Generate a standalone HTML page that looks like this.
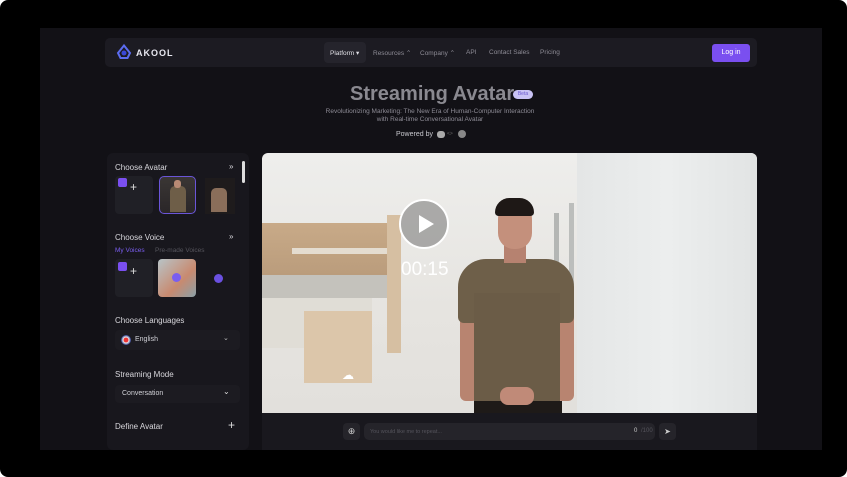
<!DOCTYPE html>
<html><head><style>
*{margin:0;padding:0;box-sizing:border-box}
body{width:847px;height:477px;background:#fff;font-family:"Liberation Sans",sans-serif;overflow:hidden;position:relative}
.frame{position:absolute;left:0;top:0;width:847px;height:477px;background:#000;border-radius:8px}
.page{position:absolute;left:40px;top:28px;width:782px;height:422px;background:#121116}
.nav{position:absolute;left:105px;top:38px;width:652px;height:29px;background:#1c1b22;border-radius:5px}
.abs{position:absolute}
.nl{font-size:6.5px;color:#8d8b95;top:49px}
.side{position:absolute;left:107px;top:153px;width:142px;height:297px;background:#18171d;border-radius:6px}
.h{font-size:8px;color:#d8d7dc;position:absolute}
.card{position:absolute;background:#202026;border-radius:4px}
.video{position:absolute;left:262px;top:153px;width:495px;height:260px;border-radius:6px 6px 0 0;overflow:hidden;
background:linear-gradient(180deg,#eeeeec 0%,#e6e4e0 60%,#e2e0dc 100%)}
.bar{position:absolute;left:262px;top:413px;width:495px;height:37px;background:#19181e}
</style></head><body>
<div class="frame"></div>
<div class="page"></div>
<div class="nav"></div>
<svg class="abs" style="left:115px;top:44px" width="18" height="16" viewBox="0 0 18 16"><path d="M9 1.5L3 9l2.5 5h7L15 9z" fill="none" stroke="#5b6cf0" stroke-width="2"/><circle cx="9" cy="9" r="2.5" fill="#3a48d8"/></svg>
<div class="abs" style="left:136px;top:48px;font-size:9px;color:#e8e8f0;font-weight:bold;letter-spacing:1px">AKOOL</div>
<div class="abs" style="left:324px;top:42px;width:42px;height:21px;background:#25242c;border-radius:4px"></div>
<div class="abs nl" style="left:330px;color:#e0e0e6">Platform ▾</div>
<div class="abs nl" style="left:373px">Resources ⌃</div>
<div class="abs nl" style="left:420px">Company ⌃</div>
<div class="abs nl" style="left:466px">API</div>
<div class="abs nl" style="left:489px">Contact Sales</div>
<div class="abs nl" style="left:540px">Pricing</div>
<div class="abs" style="left:712px;top:44px;width:38px;height:18px;background:#7a4ff0;border-radius:3px;color:#fff;font-size:7px;text-align:center;line-height:18px">Log in</div>
<div class="abs" style="left:350px;top:83px;font-size:20px;font-weight:bold;color:#8a8990">Streaming Avatar</div>
<div class="abs" style="left:513px;top:90px;width:20px;height:9px;background:#c9c3f5;border-radius:5px;font-size:5px;color:#6a5ad0;text-align:center;line-height:9px">Beta</div>
<div class="abs" style="left:300px;top:108px;width:260px;text-align:center;font-size:6.5px;color:#8d8b95;line-height:8px">Revolutionizing Marketing: The New Era of Human-Computer Interaction<br>with Real-time Conversational Avatar</div>
<div class="abs" style="left:396px;top:131px;font-size:7px;color:#c8c8ce">Powered by</div>
<div class="abs" style="left:437px;top:131px;width:8px;height:7px;background:#aaa;border-radius:3px"></div>
<div class="abs" style="left:447px;top:131px;font-size:5px;color:#666">&lt;&gt;</div>
<div class="abs" style="left:458px;top:130px;width:8px;height:8px;background:#888;border-radius:50%"></div>

<div class="side"></div>
<div class="abs" style="left:242px;top:161px;width:3px;height:22px;background:#ddd;border-radius:2px"></div>
<div class="h" style="left:115px;top:163px">Choose Avatar</div>
<div class="h" style="left:229px;top:162px">»</div>
<div class="card" style="left:115px;top:176px;width:38px;height:38px"></div>
<div class="abs" style="left:118px;top:178px;width:9px;height:9px;background:#7a4ff0;border-radius:2px"></div>
<div class="abs" style="left:130px;top:180px;color:#ddd;font-size:12px">+</div>
<div class="abs" style="left:159px;top:176px;width:37px;height:38px;border:1.5px solid #6a55d8;border-radius:5px;background:linear-gradient(#3a3634,#2a2628)"></div>
<div class="abs" style="left:170px;top:186px;width:16px;height:26px;background:#6e5e48;border-radius:5px 5px 0 0"></div>
<div class="abs" style="left:174px;top:180px;width:7px;height:8px;background:#b88a74;border-radius:3px"></div>
<div class="abs" style="left:205px;top:178px;width:30px;height:36px;background:#1e1b1c"></div>
<div class="abs" style="left:211px;top:188px;width:16px;height:24px;background:#8a6e5a;border-radius:5px 5px 0 0"></div>
<div class="h" style="left:115px;top:233px">Choose Voice</div>
<div class="h" style="left:229px;top:232px">»</div>
<div class="abs" style="left:115px;top:247px;font-size:6.5px;color:#7a5ef0">My Voices</div>
<div class="abs" style="left:155px;top:247px;font-size:6.5px;color:#55545c">Pre-made Voices</div>
<div class="card" style="left:115px;top:259px;width:38px;height:38px"></div>
<div class="abs" style="left:118px;top:262px;width:9px;height:9px;background:#7a4ff0;border-radius:2px"></div>
<div class="abs" style="left:130px;top:264px;color:#ddd;font-size:12px">+</div>
<div class="abs" style="left:158px;top:259px;width:38px;height:38px;border-radius:4px;background:linear-gradient(135deg,#b8c4c8,#c88a70 60%,#8aa0a8)"></div>
<div class="abs" style="left:172px;top:273px;width:9px;height:9px;background:#7a5ef0;border-radius:50%"></div>
<div class="abs" style="left:214px;top:274px;width:9px;height:9px;background:#6a50e0;border-radius:50%"></div>
<div class="h" style="left:115px;top:316px">Choose Languages</div>
<div class="card" style="left:115px;top:330px;width:125px;height:20px;background:#1c1b21"></div>
<div class="abs" style="left:121px;top:335px;width:10px;height:10px;border-radius:50%;background:radial-gradient(#e33 30%,#eee 40%,#2a3a8a 70%)"></div>
<div class="abs" style="left:135px;top:336px;font-size:7px;color:#d0d0d6">English</div>
<div class="abs" style="left:223px;top:334px;font-size:7px;color:#bbb">⌄</div>
<div class="h" style="left:115px;top:370px">Streaming Mode</div>
<div class="card" style="left:115px;top:385px;width:125px;height:18px;background:#1c1b21"></div>
<div class="abs" style="left:122px;top:390px;font-size:7px;color:#d0d0d6">Conversation</div>
<div class="abs" style="left:223px;top:387px;font-size:8px;color:#ddd">⌄</div>
<div class="h" style="left:115px;top:422px">Define  Avatar</div>
<div class="abs" style="left:228px;top:418px;font-size:12px;color:#ddd">+</div>

<div class="video">
<div class="abs" style="left:0;top:70px;width:125px;height:60px;background:linear-gradient(#c8aa88,#b89a7a)"></div>
<div class="abs" style="left:30px;top:95px;width:95px;height:6px;background:#e4dcd0"></div>
<div class="abs" style="left:0;top:122px;width:125px;height:23px;background:#c4c2bc"></div>
<div class="abs" style="left:0;top:145px;width:110px;height:50px;background:#e0ddd6"></div>
<div class="abs" style="left:42px;top:158px;width:68px;height:72px;background:#dcc6aa"></div>
<div class="abs" style="left:125px;top:62px;width:14px;height:138px;background:#d6bfa2"></div>
<div class="abs" style="left:292px;top:60px;width:5px;height:150px;background:#b4b6b4"></div>
<div class="abs" style="left:307px;top:50px;width:5px;height:160px;background:#bcbebc"></div>
<div class="abs" style="left:315px;top:0;width:180px;height:260px;background:linear-gradient(90deg,#e4e6e6,#eceeee 50%,#e2e4e4)"></div>
<!-- person -->
<div class="abs" style="left:198px;top:160px;width:18px;height:88px;background:#b88470;border-radius:6px"></div>
<div class="abs" style="left:294px;top:160px;width:18px;height:88px;background:#b88470;border-radius:6px"></div>
<div class="abs" style="left:196px;top:106px;width:116px;height:64px;background:#6e5f49;border-radius:28px 28px 6px 6px"></div>
<div class="abs" style="left:212px;top:140px;width:86px;height:110px;background:#6b5c47"></div>
<div class="abs" style="left:212px;top:248px;width:88px;height:12px;background:#1e1a18"></div>
<div class="abs" style="left:238px;top:234px;width:34px;height:18px;background:#c08a78;border-radius:8px"></div>
<div class="abs" style="left:242px;top:88px;width:22px;height:22px;background:#b68270"></div>
<div class="abs" style="left:236px;top:52px;width:34px;height:44px;background:#c4907c;border-radius:14px 14px 16px 16px"></div>
<div class="abs" style="left:233px;top:45px;width:39px;height:18px;background:#1e1816;border-radius:16px 16px 4px 4px"></div>
<div class="abs" style="left:80px;top:215px;font-size:12px;color:#fff">☁</div>
<!-- play -->
<div class="abs" style="left:137px;top:46px;width:50px;height:50px;border:2.5px solid #fff;border-radius:50%;background:rgba(90,90,90,.45)"></div>
<svg class="abs" style="left:155px;top:61px" width="18" height="20"><path d="M2 1L17 10 2 19z" fill="#fff"/></svg>
<div class="abs" style="left:139px;top:106px;font-size:19px;color:#fff">00:15</div>
</div>
<div class="bar"></div>
<div class="abs" style="left:343px;top:423px;width:17px;height:17px;background:#25242a;border-radius:4px;color:#ccc;font-size:9px;text-align:center;line-height:17px">⊕</div>
<div class="abs" style="left:364px;top:423px;width:291px;height:17px;background:#25242a;border-radius:5px"></div>
<div class="abs" style="left:370px;top:429px;font-size:5.5px;color:#55545c">You would like me to repeat...</div>
<div class="abs" style="left:634px;top:428px;font-size:6px;color:#ccc">0</div>
<div class="abs" style="left:641px;top:428px;font-size:6px;color:#55545c">/100</div>
<div class="abs" style="left:659px;top:423px;width:17px;height:17px;background:#25242a;border-radius:4px;color:#ccc;font-size:8px;text-align:center;line-height:17px">➤</div>
</body></html>
